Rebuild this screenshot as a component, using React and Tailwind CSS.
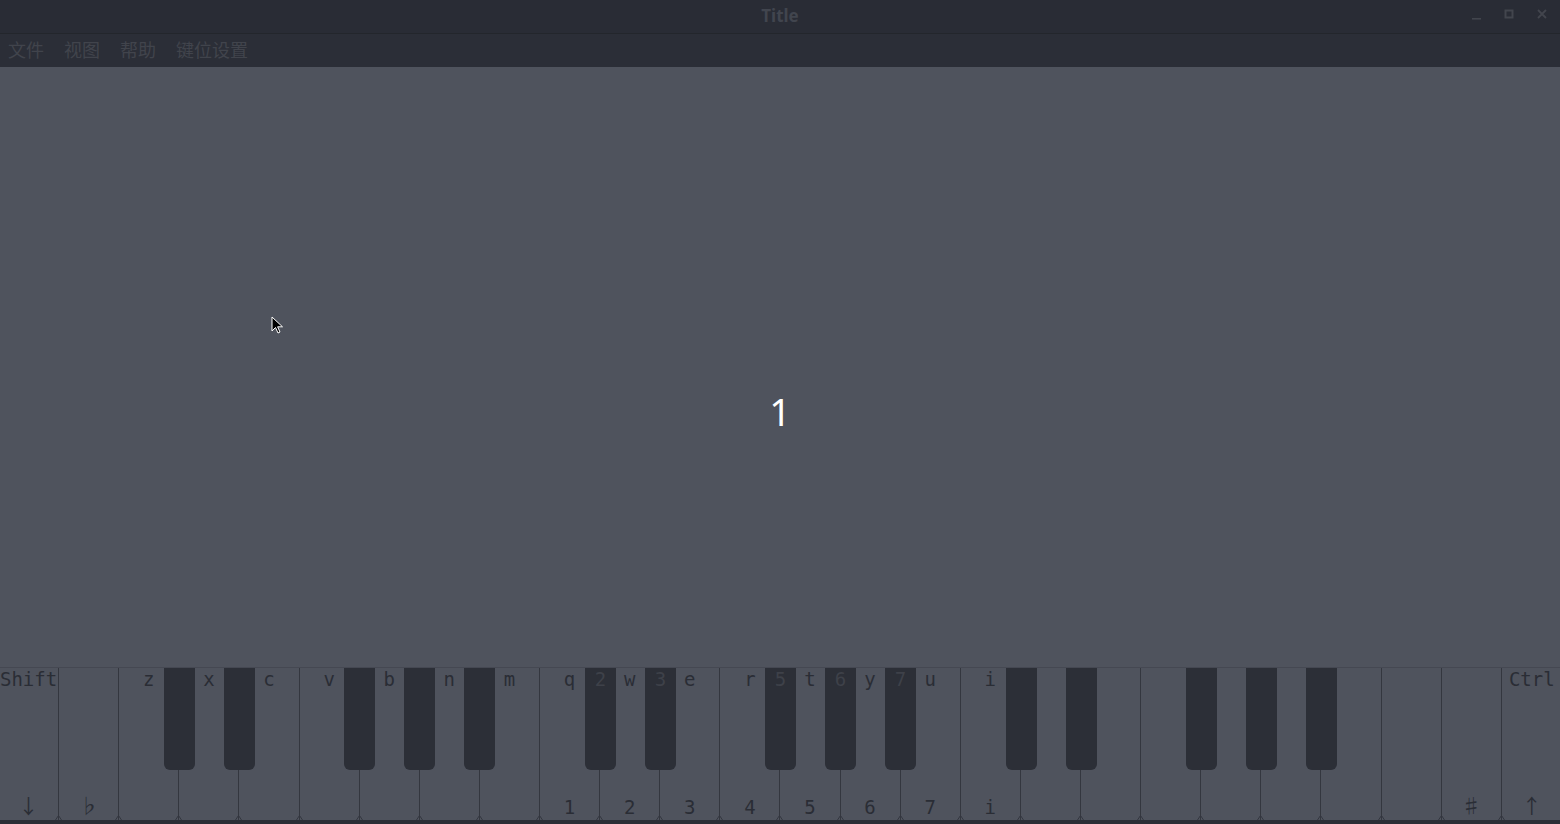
import React from "react";

const whiteKeys = [
  { top: "Shift", bottom: "↓" },
  { top: "", bottom: "♭" },
  { top: "z", bottom: "" },
  { top: "x", bottom: "" },
  { top: "c", bottom: "" },
  { top: "v", bottom: "" },
  { top: "b", bottom: "" },
  { top: "n", bottom: "" },
  { top: "m", bottom: "" },
  { top: "q", bottom: "1" },
  { top: "w", bottom: "2" },
  { top: "e", bottom: "3" },
  { top: "r", bottom: "4" },
  { top: "t", bottom: "5" },
  { top: "y", bottom: "6" },
  { top: "u", bottom: "7" },
  { top: "i", bottom: "i" },
  { top: "", bottom: "" },
  { top: "", bottom: "" },
  { top: "", bottom: "" },
  { top: "", bottom: "" },
  { top: "", bottom: "" },
  { top: "", bottom: "" },
  { top: "", bottom: "" },
  { top: "", bottom: "♯" },
  { top: "Ctrl", bottom: "↑" },
];

// black keys sit on the border after white key index i
const blackKeys = [
  { after: 2, label: "" },
  { after: 3, label: "" },
  { after: 5, label: "" },
  { after: 6, label: "" },
  { after: 7, label: "" },
  { after: 9, label: "2" },
  { after: 10, label: "3" },
  { after: 12, label: "5" },
  { after: 13, label: "6" },
  { after: 14, label: "7" },
  { after: 16, label: "" },
  { after: 17, label: "" },
  { after: 19, label: "" },
  { after: 20, label: "" },
  { after: 21, label: "" },
];

const KEY_W = 60.12;
const mono = { fontFamily: '"DejaVu Sans Mono", "Liberation Mono", monospace' };
const symbols = ["↓", "↑", "♭", "♯"];

function Piano() {
  return (
    <div className="relative h-[153px] border-t border-[#454852] bg-[#4f535d]">
      <div className="-ml-[1px] grid h-full grid-cols-[repeat(26,60.12px)]">
        {whiteKeys.map((k, i) => (
          <div
            key={i}
            className={`relative flex flex-col items-center justify-between ${i < 25 ? "border-r border-[#34373f]" : ""}`}
            style={mono}
          >
            <span className="mt-[1px] text-[19px] leading-[20px] text-[#2a2d35]">{k.top}</span>
            {symbols.includes(k.bottom) ? (
              <span
                className="mb-[3px] text-[20px] leading-[22px] text-[#2a2d35]"
                style={{ fontFamily: '"Noto Sans CJK SC", "DejaVu Sans", sans-serif' }}
              >
                {k.bottom}
              </span>
            ) : (
              <span className="mb-[3px] text-[19px] leading-[20px] text-[#2a2d35]">{k.bottom}</span>
            )}
            {i < 25 && (
              <svg className="absolute -right-[4px] bottom-0" width="7" height="5" viewBox="0 0 7 5">
                <path d="M0.5 5 L3.5 0.5 L6.5 5" fill="none" stroke="#34373f" strokeWidth="1" />
              </svg>
            )}
          </div>
        ))}
      </div>
      {blackKeys.map((b) => (
        <div
          key={b.after}
          className="absolute top-0 flex h-[102px] w-[31px] justify-center rounded-b-[6px] bg-[#2c2f37]"
          style={{ left: Math.round((b.after + 1) * KEY_W - 1 - 15.5) }}
        >
          <span className="mt-[1px] text-[19px] leading-[20px] text-[#3e4149]" style={mono}>
            {b.label}
          </span>
        </div>
      ))}
    </div>
  );
}

export default function App() {
  return (
    <div
      className="flex h-[824px] w-[1560px] flex-col overflow-hidden bg-[#4f535d]"
      style={{ fontFamily: '"Noto Sans", "Noto Sans CJK SC", sans-serif' }}
    >
      {/* title bar */}
      <div className="relative flex h-[34px] items-center justify-center border-b border-[#23262c] bg-[#292c35]">
        <span className="-mt-[2px] text-[17px] font-bold text-[#41454e]">Title</span>
        <div className="absolute right-0 top-0 flex h-[30px] items-center gap-[19px] pr-[11px]">
          <svg width="14" height="14" viewBox="0 0 14 14">
            <rect x="3" y="10" width="9" height="1.6" fill="#42454d" />
          </svg>
          <svg width="14" height="14" viewBox="0 0 14 14">
            <rect x="3.5" y="2.5" width="7" height="7" fill="none" stroke="#42454d" strokeWidth="2" />
          </svg>
          <svg width="14" height="14" viewBox="0 0 14 14">
            <path d="M3 2 L11 10 M11 2 L3 10" stroke="#42454d" strokeWidth="1.8" />
          </svg>
        </div>
      </div>

      {/* menu bar */}
      <div className="flex h-[33px] items-center gap-[20px] bg-[#2b2e37] pl-[8px]">
        {["文件", "视图", "帮助", "键位设置"].map((m) => (
          <span key={m} className="-mt-[1px] text-[18px] leading-none text-[#41444c]">
            {m}
          </span>
        ))}
      </div>

      {/* main display */}
      <div className="relative flex h-[600px] items-center justify-center pt-[88px]">
        <span className="text-[38px] leading-none text-white">1</span>
        <svg className="absolute left-[271px] top-[249px]" width="14" height="20" viewBox="0 0 14 20">
          <path d="M1 1 L1 15 L4.5 11.5 L7 17 L9 16 L6.6 10.8 L11.5 10.8 Z" fill="#000" stroke="#fff" strokeWidth="1" />
        </svg>
      </div>

      <Piano />
      <div className="h-[4px] bg-[#2b2e36]" />
    </div>
  );
}
